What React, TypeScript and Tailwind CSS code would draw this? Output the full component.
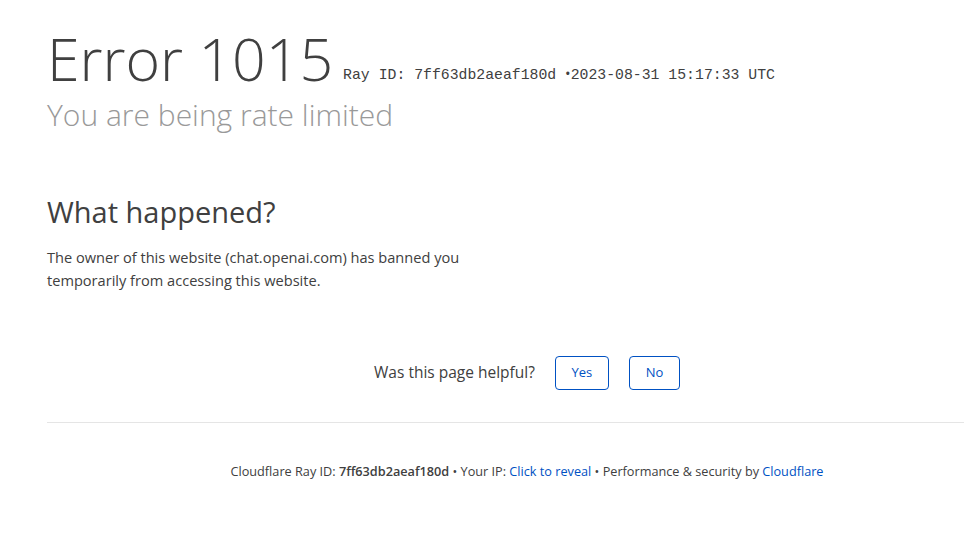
export default function App() {
  return (
    <div className="min-h-[555px] bg-white text-[#404040]" style={{ fontFamily: '"Open Sans", "Noto Sans", sans-serif' }}>
      <div className="ml-[47px] w-[960px] pt-[22px]">
        <div className="flex h-[72px] items-baseline">
          <h1 className="text-[59px] font-light leading-[72px] text-[#404040]">Error 1015</h1>
          <span className="relative top-[-2px] ml-[10px] text-[14.8px] text-[#404040]" style={{ fontFamily: '"Liberation Mono", monospace' }}>
            Ray ID: 7ff63db2aeaf180d <span style={{ fontFamily: '"Open Sans", sans-serif' }}>•</span>2023-08-31 15:17:33 UTC
          </span>
        </div>
        <h2 className="mt-[3px] text-[30px] font-light leading-[36px] text-[#999999]">You are being rate limited</h2>

        <h2 className="mt-[59px] text-[29px] leading-[40px] text-[#404040]">What happened?</h2>
        <p className="mt-[14px] w-[420px] text-[14.6px] leading-[23px] text-[#404040]">
          The owner of this website (chat.openai.com) has banned you temporarily from accessing this website.
        </p>

        <div className="mt-[64px] flex items-center justify-center gap-5">
          <span className="text-[15.5px] text-[#404040]">Was this page helpful?</span>
          <button className="h-[34px] w-[54px] rounded border border-[#0051c3] text-[13px] text-[#0051c3]">Yes</button>
          <button className="h-[34px] w-[51px] rounded border border-[#0051c3] text-[13px] text-[#0051c3]">No</button>
        </div>

        <div className="mt-[32px] border-t border-[#e5e5e5]" />

        <div className="mt-[39px] text-center text-[12.7px] text-[#404040]">
          Cloudflare Ray ID: <strong className="font-semibold">7ff63db2aeaf180d</strong> • Your IP:{" "}
          <span className="text-[#0051c3]">Click to reveal</span> • Performance &amp; security by{" "}
          <span className="text-[#0051c3]">Cloudflare</span>
        </div>
      </div>
    </div>
  );
}
